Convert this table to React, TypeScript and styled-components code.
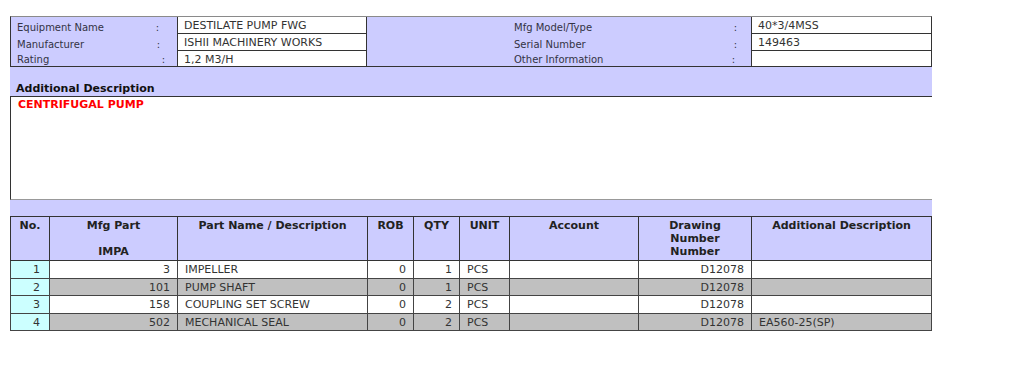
import styled, { createGlobalStyle } from "styled-components";

const GlobalStyle = createGlobalStyle`
  body {
    margin: 0;
    background: #ffffff;
    font-family: "DejaVu Sans", Verdana, sans-serif;
    color: #333333;
  }
`;

const LAVENDER = "#ccccff";

const Page = styled.div`
  padding: 16px 0 0 10px;
  width: 922px;
`;

const InfoGrid = styled.div`
  display: grid;
  grid-template-columns: 166px 190px 384px 180px;
  grid-template-rows: 17px 17px 15px;
  background: ${LAVENDER};
  border: 1px solid #333333;
  border-top-color: #8a8a8a;
`;

const Label = styled.div<{ $colonGap: number; $indent?: number }>`
  display: flex;
  justify-content: space-between;
  align-items: flex-end;
  padding: 0 ${(p) => p.$colonGap}px 0 ${(p) => p.$indent ?? 6}px;
  font-size: 10px;
  line-height: 13px;
  color: #333344;
`;

const Value = styled.div<{ $last?: boolean; $right?: boolean }>`
  box-sizing: border-box;
  height: 100%;
  overflow: hidden;
  background: #ffffff;
  border-left: 1px solid #333333;
  border-right: ${(p) => (p.$right ? "none" : "1px solid #333333")};
  border-bottom: ${(p) => (p.$last ? "none" : "1px solid #333333")};
  padding: 2px 0 0 6px;
  font-size: 11px;
  line-height: 14px;
  color: #333333;
`;

const DescHeader = styled.div`
  display: flex;
  align-items: flex-end;
  height: 29px;
  padding-left: 6px;
  background: ${LAVENDER};
  border-bottom: 1px solid #333333;
  font-size: 11px;
  font-weight: bold;
  line-height: 14px;
  color: #111111;
`;

const DescBody = styled.div`
  height: 102px;
  padding: 0 7px;
  background: #ffffff;
  border-left: 1px solid #333333;
  border-bottom: 1px solid #999999;
  font-size: 11px;
  font-weight: bold;
  line-height: 15px;
  color: #ff0000;
`;

const Spacer = styled.div`
  height: 16px;
  background: ${LAVENDER};
`;

const PartsTable = styled.table`
  width: 921px;
  border-collapse: collapse;
  table-layout: fixed;
  font-size: 11px;
`;

const HeadCell = styled.th<{ $w: number }>`
  box-sizing: border-box;
  width: ${(p) => p.$w}px;
  padding: 2px 3px 2px;
  background: ${LAVENDER};
  border: 1px solid #333333;
  vertical-align: top;
  text-align: center;
  font-weight: bold;
  line-height: 13px;
  color: #222222;
`;

const Row = styled.tr<{ $shade: boolean }>`
  background: ${(p) => (p.$shade ? "#c0c0c0" : "#ffffff")};
`;

const Cell = styled.td<{ $align?: "left" | "right" | "center"; $no?: boolean }>`
  padding: 1px 7px 0;
  border: 1px solid #444444;
  border-top-color: #666666;
  text-align: ${(p) => p.$align ?? "left"};
  line-height: 15.6px;
  white-space: nowrap;
  overflow: hidden;
  color: #333333;
  ${(p) => (p.$no ? "background: #ccffff; padding-right: 9px;" : "")}
`;

const parts = [
  { no: 1, impa: "3", name: "IMPELLER", rob: 0, qty: 1, unit: "PCS", drawing: "D12078", desc: "" },
  { no: 2, impa: "101", name: "PUMP SHAFT", rob: 0, qty: 1, unit: "PCS", drawing: "D12078", desc: "" },
  { no: 3, impa: "158", name: "COUPLING SET SCREW", rob: 0, qty: 2, unit: "PCS", drawing: "D12078", desc: "" },
  { no: 4, impa: "502", name: "MECHANICAL SEAL", rob: 0, qty: 2, unit: "PCS", drawing: "D12078", desc: "EA560-25(SP)" },
];

const info = [
  { left: "Equipment Name", leftGap: 18, value: "DESTILATE PUMP FWG", right: "Mfg Model/Type", rightGap: 14, rvalue: "40*3/4MSS" },
  { left: "Manufacturer", leftGap: 17, value: "ISHII MACHINERY WORKS", right: "Serial Number", rightGap: 14, rvalue: "149463" },
  { left: "Rating", leftGap: 12, value: "1,2 M3/H", right: "Other Information", rightGap: 16, rvalue: "" },
];

export default function App() {
  return (
    <>
      <GlobalStyle />
      <Page>
        <InfoGrid>
          {info.map((r, i) => {
            const last = i === info.length - 1;
            return [
              <Label key={`l${i}`} $colonGap={r.leftGap}>
                <span>{r.left}</span>
                <span>:</span>
              </Label>,
              <Value key={`v${i}`} $last={last}>
                {r.value}
              </Value>,
              <Label key={`r${i}`} $colonGap={r.rightGap} $indent={147}>
                <span>{r.right}</span>
                <span>:</span>
              </Label>,
              <Value key={`rv${i}`} $last={last} $right>
                {r.rvalue}
              </Value>,
            ];
          })}
        </InfoGrid>

        <DescHeader>Additional Description</DescHeader>
        <DescBody>CENTRIFUGAL PUMP</DescBody>
        <Spacer />

        <PartsTable>
          <thead>
            <tr>
              <HeadCell $w={39}>No.</HeadCell>
              <HeadCell $w={128}>
                Mfg Part
                <br />
                <br />
                IMPA
              </HeadCell>
              <HeadCell $w={190}>Part Name / Description</HeadCell>
              <HeadCell $w={46}>ROB</HeadCell>
              <HeadCell $w={46}>QTY</HeadCell>
              <HeadCell $w={50}>UNIT</HeadCell>
              <HeadCell $w={129}>Account</HeadCell>
              <HeadCell $w={113}>
                Drawing
                <br />
                Number
                <br />
                Number
              </HeadCell>
              <HeadCell $w={180}>Additional Description</HeadCell>
            </tr>
          </thead>
          <tbody>
            {parts.map((p, i) => (
              <Row key={p.no} $shade={i % 2 === 1}>
                <Cell $align="right" $no>
                  {p.no}
                </Cell>
                <Cell $align="right">{p.impa}</Cell>
                <Cell>{p.name}</Cell>
                <Cell $align="right">{p.rob}</Cell>
                <Cell $align="right">{p.qty}</Cell>
                <Cell>{p.unit}</Cell>
                <Cell></Cell>
                <Cell $align="right">{p.drawing}</Cell>
                <Cell>{p.desc}</Cell>
              </Row>
            ))}
          </tbody>
        </PartsTable>
      </Page>
    </>
  );
}
